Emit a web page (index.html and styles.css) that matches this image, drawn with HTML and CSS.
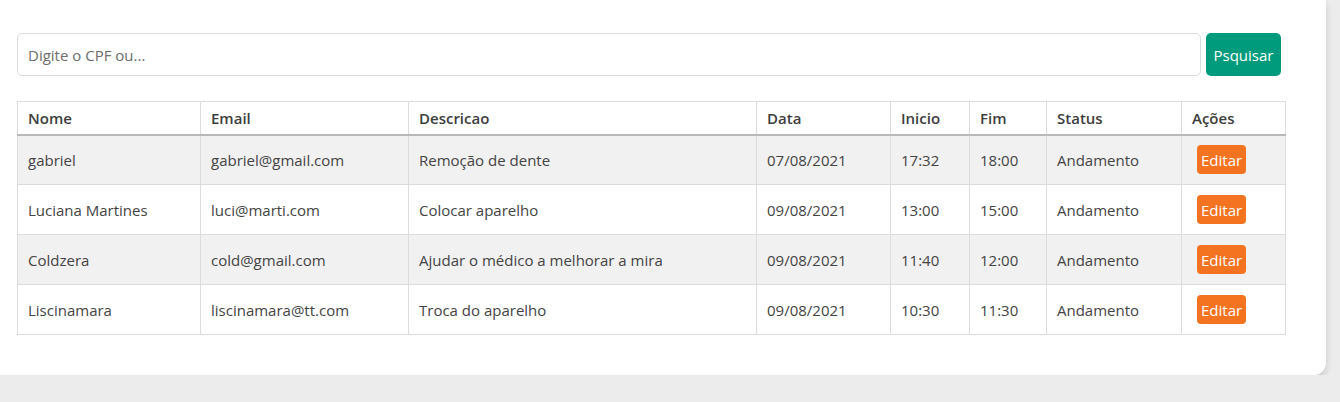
FILE: index.html
```html
<!DOCTYPE html>
<html lang="pt">
<head>
<meta charset="utf-8">
<title>Agendamentos</title>
<link rel="stylesheet" href="styles.css">
</head>
<body>
<div class="card">
  <form class="search">
    <input class="search-input" type="text" placeholder="Digite o CPF ou...">
    <button class="btn btn-search" type="button">Psquisar</button>
  </form>
  <table class="table">
    <colgroup>
      <col style="width:183px">
      <col style="width:208px">
      <col style="width:348px">
      <col style="width:134px">
      <col style="width:79px">
      <col style="width:77px">
      <col style="width:135px">
      <col style="width:104px">
    </colgroup>
    <thead>
      <tr><th>Nome</th><th>Email</th><th>Descricao</th><th>Data</th><th>Inicio</th><th>Fim</th><th>Status</th><th>Ações</th></tr>
    </thead>
    <tbody>
      <tr><td>gabriel</td><td>gabriel@gmail.com</td><td>Remoção de dente</td><td>07/08/2021</td><td>17:32</td><td>18:00</td><td>Andamento</td><td><button class="btn btn-edit" type="button">Editar</button></td></tr>
      <tr><td>Luciana Martines</td><td>luci@marti.com</td><td>Colocar aparelho</td><td>09/08/2021</td><td>13:00</td><td>15:00</td><td>Andamento</td><td><button class="btn btn-edit" type="button">Editar</button></td></tr>
      <tr><td>Coldzera</td><td>cold@gmail.com</td><td>Ajudar o médico a melhorar a mira</td><td>09/08/2021</td><td>11:40</td><td>12:00</td><td>Andamento</td><td><button class="btn btn-edit" type="button">Editar</button></td></tr>
      <tr><td>Liscinamara</td><td>liscinamara@tt.com</td><td>Troca do aparelho</td><td>09/08/2021</td><td>10:30</td><td>11:30</td><td>Andamento</td><td><button class="btn btn-edit" type="button">Editar</button></td></tr>
    </tbody>
  </table>
</div>
</body>
</html>
```
FILE: styles.css
```css
* { box-sizing: border-box; }
html, body {
  margin: 0;
  background: #ececec;
  font-family: "Open Sans", "Noto Sans", sans-serif;
  font-size: 15px;
  color: #444;
}
.card {
  background: #fff;
  width: 1326px;
  height: 375px;
  padding: 33px 0 0 17px;
  border-radius: 0 0 12px 0;
  box-shadow: 0 4px 7px rgba(0, 0, 0, 0.15);
}
.search {
  display: flex;
  gap: 5px;
  width: 1264px;
  margin: 0 0 25px 0;
}
.search-input {
  flex: 1;
  height: 43px;
  border: 1px solid #dcdcdc;
  border-radius: 5px;
  padding: 0 10px;
  font-family: inherit;
  font-size: 15px;
  color: #444;
  outline: none;
}
.search-input::placeholder { color: #6d6d6d; }
.btn {
  border: none;
  color: #fff;
  font-family: inherit;
  font-size: 15px;
  cursor: pointer;
}
.btn-search {
  width: 75px;
  height: 43px;
  background: #009b7d;
  border-radius: 5px;
  padding: 0;
}
.table {
  width: 1268px;
  table-layout: fixed;
  border-collapse: collapse;
}
.table th,
.table td {
  border: 1px solid #dcdcdc;
  text-align: left;
  padding: 0 10px;
  white-space: nowrap;
}
.table th {
  font-weight: 600;
  color: #3d3d3d;
  height: 33px;
  padding-top: 1px;
  border-bottom: 2px solid #b9b9b9;
}
.table td {
  height: 50px;
  vertical-align: middle;
}
.table tbody tr:nth-child(odd) { background: #f1f1f1; }
.btn-edit {
  margin-left: 5px;
  height: 29px;
  padding: 0 4px;
  background: #f37321;
  border-radius: 4px;
  vertical-align: middle;
}
```
